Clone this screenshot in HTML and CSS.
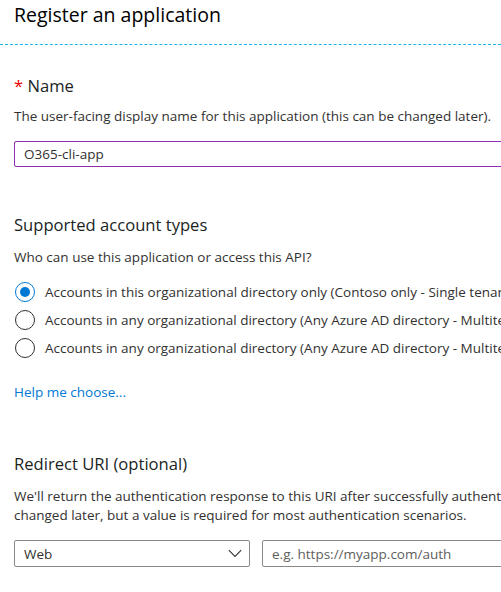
FILE: index.html
```html
<!DOCTYPE html>
<html>

<head>
	<title>Register an application</title>
	<link rel="stylesheet" href="styles.css">
</head>

<body>
	<div class="header">
		<h1>Register an application</h1>
	</div>
	<div class="main">
		<div class="section first">
			<h2><span class="req">*</span> Name</h2>
			<p>The user-facing display name for this application (this can be changed later).</p>
			<input class="text name" type="text" value="O365-cli-app">
		</div>
		<div class="section accounts">
			<h2>Supported account types</h2>
			<p>Who can use this application or access this API?</p>
			<div class="radios">
				<label class="radio"><span class="dot checked"></span>Accounts in this organizational directory only (Contoso only - Single tenant)</label>
				<label class="radio"><span class="dot"></span>Accounts in any organizational directory (Any Azure AD directory - Multitenant)</label>
				<label class="radio"><span class="dot"></span>Accounts in any organizational directory (Any Azure AD directory - Multitenant) and personal Microsoft accounts</label>
			</div>
			<a class="help" href="#">Help me choose...</a>
		</div>
		<div class="section redirect">
			<h2>Redirect URI (optional)</h2>
			<p>We'll return the authentication response to this URI after successfully authenticating the user. Providing this now is optional and it can be<br>changed later, but a value is required for most authentication scenarios.</p>
			<div class="uri">
				<div class="select">
					<span>Web</span>
					<svg width="14" height="9" viewBox="0 0 14 9"><path d="M0.8 1.2 L7 7.4 L13.2 1.2" fill="none" stroke="#323130" stroke-width="1.1"/></svg>
				</div>
				<input class="text url" type="text" placeholder="e.g. https://myapp.com/auth">
			</div>
		</div>
	</div>
</body>

</html>
```

FILE: styles.css
```css
html,
body {
	margin: 0;
	padding: 0;
	overflow: hidden;
}

body {
	background: #fff;
	color: #323130;
	font-family: "Open Sans", "Noto Sans", sans-serif;
	font-size: 13.5px;
	width: 501px;
}

.header {
	height: 44px;
	border-bottom: 1px dashed #18b4e9;
	padding-left: 14px;
}

h1 {
	margin: 0;
	padding-top: 1px;
	font-size: 19.5px;
	font-weight: 400;
	color: #000;
	white-space: nowrap;
}

.main {
	padding-left: 14px;
	width: 700px;
}

.section {
	padding-top: 30px;
	margin-bottom: 20px;
}

.section.accounts {
	padding-top: 27px;
}

.accounts p {
	margin-top: 12px;
}

.section.redirect {
	padding-top: 32px;
}

.redirect p {
	margin-top: 12px;
}

h2 {
	margin: 0;
	font-size: 16.6px;
	font-weight: 400;
	color: #201f1e;
	line-height: 22px;
}

.req {
	color: #e00;
}

p {
	margin: 10px 0 0;
	line-height: 19px;
	white-space: nowrap;
}

.text {
	box-sizing: border-box;
	height: 26px;
	border: 1px solid #8a8886;
	border-radius: 2px;
	padding: 0 9px;
	font-family: inherit;
	font-size: 13.5px;
	color: #323130;
	outline: none;
}

.text::placeholder {
	color: #605e5c;
}

.name {
	display: block;
	margin-top: 15px;
	width: 560px;
	border-color: #8d2eb3;
}

.radios {
	display: flex;
	flex-direction: column;
	gap: 8px;
	margin-top: 15px;
}

.radio {
	display: flex;
	align-items: center;
	gap: 10px;
	white-space: nowrap;
	line-height: 20px;
}

.dot {
	box-sizing: border-box;
	width: 20px;
	height: 20px;
	border: 1px solid #323130;
	border-radius: 50%;
	display: flex;
	align-items: center;
	justify-content: center;
	flex: none;
	margin-left: 1px;
}

.dot.checked {
	border-color: #0078d4;
}

.dot.checked::after {
	content: "";
	width: 10px;
	height: 10px;
	border-radius: 50%;
	background: #0078d4;
}

.help {
	display: inline-block;
	margin-top: 25px;
	color: #0078d4;
	text-decoration: none;
}

.uri {
	display: flex;
	gap: 12px;
	margin-top: 15px;
}

.select {
	box-sizing: border-box;
	display: flex;
	align-items: center;
	justify-content: space-between;
	width: 236px;
	height: 27px;
	border: 1px solid #8a8886;
	border-radius: 2px;
	padding: 0 7px 0 9px;
}

.url {
	width: 300px;
	height: 27px;
}
```
